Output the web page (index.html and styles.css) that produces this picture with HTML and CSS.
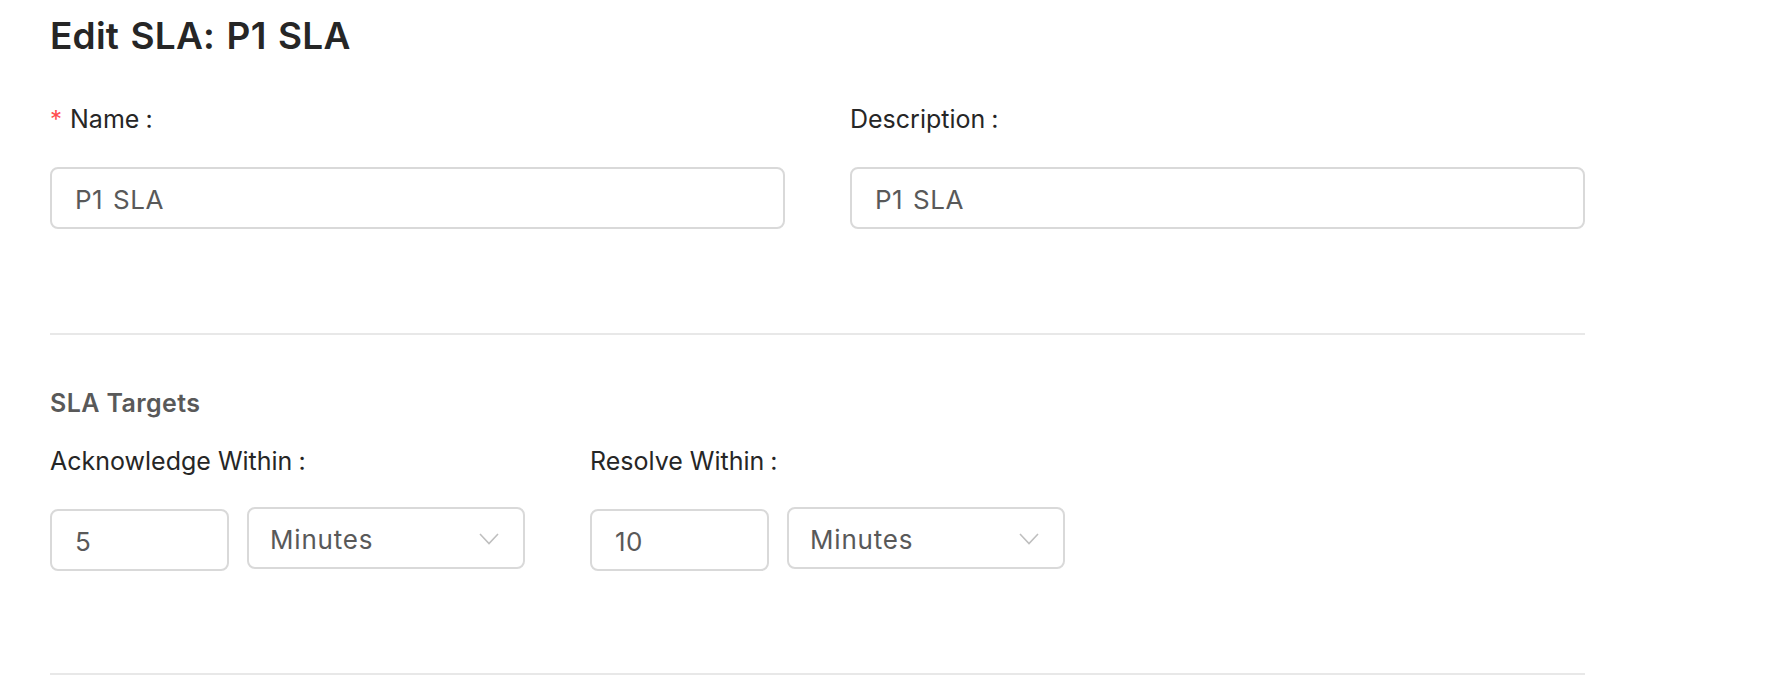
FILE: index.html
```html
<!DOCTYPE html>
<html lang="en">
<head>
<meta charset="utf-8">
<title>Edit SLA</title>
<link rel="stylesheet" href="styles.css">
</head>
<body>
<div class="page">
  <h1 class="title">Edit SLA: P1 SLA</h1>

  <div class="grid-two">
    <div class="field">
      <label class="label"><span class="req">*</span>Name<span class="colon">:</span></label>
      <input class="input" type="text" value="P1 SLA">
    </div>
    <div class="field">
      <label class="label">Description<span class="colon">:</span></label>
      <input class="input" type="text" value="P1 SLA">
    </div>
  </div>

  <div class="divider first"></div>

  <h2 class="section">SLA Targets</h2>

  <div class="targets">
    <div class="field">
      <label class="label">Acknowledge Within<span class="colon">:</span></label>
      <div class="combo">
        <input class="input num" type="text" value="5">
        <div class="select">
          <span>Minutes</span>
          <svg class="chev" width="20" height="12" viewBox="0 0 20 12"><path d="M1 1 L10 10.5 L19 1" fill="none" stroke="#bfbfbf" stroke-width="1.6"/></svg>
        </div>
      </div>
    </div>
    <div class="field">
      <label class="label">Resolve Within<span class="colon">:</span></label>
      <div class="combo">
        <input class="input num" type="text" value="10">
        <div class="select">
          <span>Minutes</span>
          <svg class="chev" width="20" height="12" viewBox="0 0 20 12"><path d="M1 1 L10 10.5 L19 1" fill="none" stroke="#bfbfbf" stroke-width="1.6"/></svg>
        </div>
      </div>
    </div>
  </div>

  <div class="divider second"></div>
</div>
</body>
</html>
```

FILE: styles.css
```css
* { box-sizing: border-box; }
html, body {
  margin: 0;
  padding: 0;
  background: #ffffff;
}
body {
  font-family: Inter, "Noto Sans", "Liberation Sans", sans-serif;
  color: #262626;
}
.page {
  width: 1585px;
  padding-left: 50px;
}
.title {
  margin: 0;
  padding-top: 13px;
  font-size: 37px;
  line-height: 46px;
  font-weight: 600;
  color: #262626;
  letter-spacing: 0.2px;
  word-spacing: 2px;
}
.grid-two {
  display: grid;
  grid-template-columns: 735px 735px;
  column-gap: 65px;
  margin-top: 42px;
}
.field {
  display: flex;
  flex-direction: column;
}
.label {
  font-size: 25px;
  line-height: 36px;
  height: 36px;
  color: #262626;
  margin-bottom: 30px;
}
.req {
  color: #ff4d4f;
  margin-right: 8px;
  font-size: 24px;
}
.colon {
  margin-left: 6px;
}
.input {
  display: block;
  width: 100%;
  height: 62px;
  border: 2px solid #d9d9d9;
  border-radius: 8px;
  padding: 2px 23px 0;
  font-family: inherit;
  font-size: 26px;
  letter-spacing: 0.5px;
  word-spacing: 2px;
  color: #595959;
  background: #fff;
  outline: none;
}
.divider {
  height: 2px;
  width: 1535px;
  background: #e8e8e8;
}
.divider.first { margin-top: 104px; }
.section {
  margin: 50px 0 0;
  font-size: 25px;
  line-height: 36px;
  font-weight: 600;
  letter-spacing: 0.4px;
  color: #595959;
}
.targets {
  display: grid;
  grid-template-columns: 475px 475px;
  column-gap: 65px;
  margin-top: 22px;
}
.targets .label { margin-bottom: 28px; }
.combo {
  display: flex;
  align-items: flex-start;
  gap: 18px;
}
.num {
  width: 179px;
  margin-top: 2px;
}
.select {
  width: 278px;
  height: 62px;
  border: 2px solid #d9d9d9;
  border-radius: 8px;
  padding: 2px 24px 0 21px;
  display: flex;
  align-items: center;
  justify-content: space-between;
  font-size: 26px;
  letter-spacing: 0.8px;
  color: #595959;
}
.chev { display: block; }
.divider.second { margin-top: 102px; }
```
